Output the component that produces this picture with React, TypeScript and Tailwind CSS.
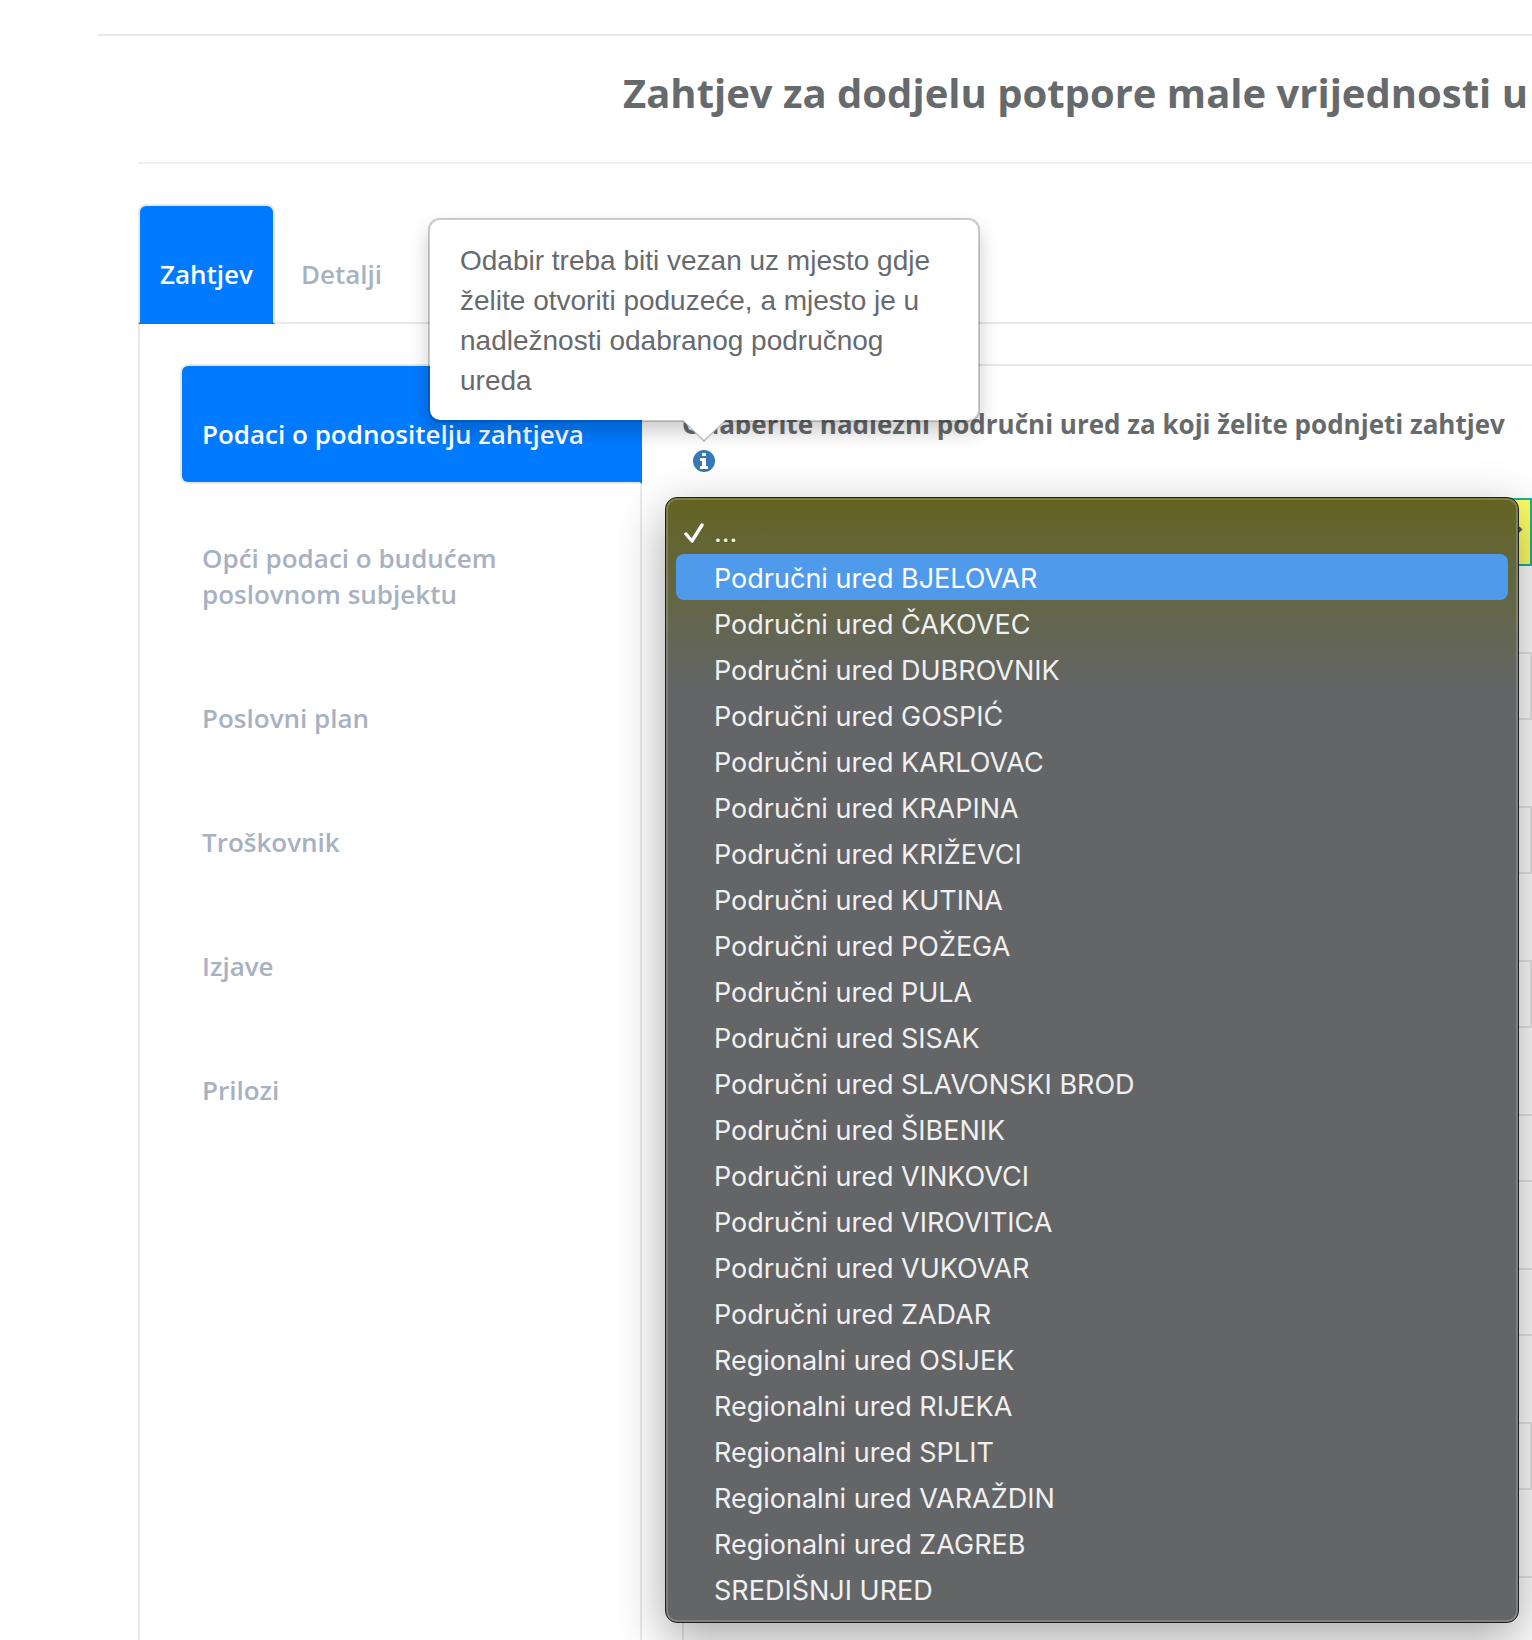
import { useState } from 'react';

const sections = [
  'Podaci o podnositelju zahtjeva',
  'Opći podaci o budućem poslovnom subjektu',
  'Poslovni plan',
  'Troškovnik',
  'Izjave',
  'Prilozi',
];

const offices = [
  '...',
  'Područni ured BJELOVAR',
  'Područni ured ČAKOVEC',
  'Područni ured DUBROVNIK',
  'Područni ured GOSPIĆ',
  'Područni ured KARLOVAC',
  'Područni ured KRAPINA',
  'Područni ured KRIŽEVCI',
  'Područni ured KUTINA',
  'Područni ured POŽEGA',
  'Područni ured PULA',
  'Područni ured SISAK',
  'Područni ured SLAVONSKI BROD',
  'Područni ured ŠIBENIK',
  'Područni ured VINKOVCI',
  'Područni ured VIROVITICA',
  'Područni ured VUKOVAR',
  'Područni ured ZADAR',
  'Regionalni ured OSIJEK',
  'Regionalni ured RIJEKA',
  'Regionalni ured SPLIT',
  'Regionalni ured VARAŽDIN',
  'Regionalni ured ZAGREB',
  'SREDIŠNJI URED',
];

function InfoTooltip() {
  return (
    <div
      id="office-hint"
      role="tooltip"
      className="absolute bottom-full left-1/2 z-20 mb-[28px] w-[552px] -translate-x-1/2 rounded-xl border-2 border-black/20 bg-white bg-clip-padding px-[30px] pt-[21px] pb-[19px] text-left font-['Liberation_Sans',Arial,sans-serif] text-[28px] leading-10 font-normal text-[#676a6c] shadow-[0_10px_20px_rgba(0,0,0,0.2)]"
    >
      Odabir treba biti vezan uz mjesto gdje želite otvoriti poduzeće, a mjesto je u nadležnosti odabranog područnog ureda
      <svg viewBox="0 0 44 22" className="absolute top-full left-1/2 h-[22px] w-11 -translate-x-1/2" aria-hidden="true">
        <path d="M0 0h44L22 22z" fill="#b4b4b4" />
        <path d="M1 0h42L22 20z" fill="#fff" />
      </svg>
    </div>
  );
}

function InfoIcon() {
  return (
    <svg viewBox="0 0 22 22" className="h-[22px] w-[22px]" aria-hidden="true">
      <circle cx="11" cy="11" r="11" fill="#337ab7" />
      <path d="M9 3h4v3H9zM7 8h6v8h2v3H7v-3h2v-5H7z" fill="#fff" />
    </svg>
  );
}

function CheckMark() {
  return (
    <svg viewBox="0 0 20 20" className="h-5 w-5" aria-hidden="true">
      <path d="M2 11l6 7L18 2" fill="none" stroke="currentColor" strokeWidth="3.4" strokeLinecap="round" strokeLinejoin="round" />
    </svg>
  );
}

interface OfficeMenuProps {
  selected: string;
  onSelect: (office: string) => void;
}

function OfficeMenu({ selected, onSelect }: OfficeMenuProps) {
  const [highlighted, setHighlighted] = useState(offices[1]);

  return (
    <ul
      role="listbox"
      aria-label="Područni uredi"
      className="absolute -top-px right-[13px] -left-[17px] z-10 rounded-xl border border-[#1c1c1c] bg-linear-to-b from-[#646420] from-0% via-[#636645] via-9% to-[#646567] to-17% px-[10px] py-[10px] font-[Inter,sans-serif] text-[27px] leading-[46px] text-[#f0f0f0] shadow-[inset_0_0_0_2px_rgba(255,255,255,0.18),0_16px_50px_rgba(0,0,0,0.35)]"
    >
      {offices.map((office) => (
        <li
          key={office}
          role="option"
          aria-selected={office === selected}
          onMouseEnter={() => setHighlighted(office)}
          onClick={() => onSelect(office)}
          className={`flex h-[46px] items-center rounded-lg pt-[3px] pl-2 whitespace-nowrap ${
            office === highlighted ? 'bg-[#4f9aeb] text-white' : ''
          }`}
        >
          <span className="flex w-[30px] shrink-0 text-white">{office === selected && <CheckMark />}</span>
          {office}
        </li>
      ))}
    </ul>
  );
}

const fieldClass = 'block h-[68px] w-full border-2 border-[#e5e6e7] bg-white px-6 outline-none';

export default function App() {
  const [office, setOffice] = useState(offices[0]);

  return (
    <div className="flex min-h-screen flex-col overflow-hidden bg-white pt-[34px] pl-[98px] font-['Open_Sans',sans-serif] text-[26px] leading-9 text-[#676a6c]">
      <div className="flex flex-1 flex-col border-t-2 border-[#e7eaec] pl-10">
        <header className="flex h-32 items-center justify-end border-b-2 border-[#eeeeee] pr-1 pb-3">
          <h1 className="text-[40px] leading-[44px] font-bold whitespace-nowrap">
            Zahtjev za dodjelu potpore male vrijednosti u
          </h1>
        </header>

        {/* Top tabs */}
        <nav className="mt-10 flex gap-1 border-b-2 border-[#e7eaec] font-semibold">
          <a
            href="#zahtjev"
            className="-mb-[2px] rounded-t-lg border-2 border-[#e7eaec] border-b-[#007bff] bg-[#007bff] px-5 pt-[50px] pb-[30px] text-white"
          >
            Zahtjev
          </a>
          <a href="#detalji" className="px-[22px] pt-[52px] pb-[30px] text-[#a7b1c2]">
            Detalji
          </a>
        </nav>

        <main className="flex flex-1 border-l-2 border-[#e7eaec] pt-10 pl-10">
          {/* Section list */}
          <nav className="flex w-[460px] shrink-0 flex-col gap-1 font-semibold">
            {sections.map((section, i) => (
              <a
                key={section}
                href={`#section-${i}`}
                className={`border-2 px-5 pt-[50px] pb-[30px] ${
                  i === 0
                    ? 'relative -mr-[2px] rounded-l-lg border-[#e7eaec] border-r-[#007bff] bg-[#007bff] text-white'
                    : 'border-transparent text-[#a7b1c2]'
                }`}
              >
                {section}
              </a>
            ))}
          </nav>

          <form className="flex min-w-0 flex-1 flex-col border-t-2 border-l-2 border-[#e7eaec] pt-10 pl-10">
            <label htmlFor="office" className="font-bold whitespace-nowrap">
              Odaberite nadležni područni ured za koji želite podnjeti zahtjev
            </label>
            <div className="flex h-9 items-center pt-[2px] pl-[11px]">
              <button type="button" aria-label="Pomoć" aria-describedby="office-hint" className="relative">
                <InfoIcon />
                <InfoTooltip />
              </button>
            </div>

            <div className="relative mt-5">
              <select
                id="office"
                value={office}
                onChange={(e) => setOffice(e.target.value)}
                className="block h-[68px] w-full appearance-none border-2 border-[#1ab394] bg-[#ffff66] px-6 outline-none"
              >
                {offices.map((name) => (
                  <option key={name}>{name}</option>
                ))}
              </select>
              <svg viewBox="0 0 16 10" className="absolute top-[28px] right-[9px] h-[10px] w-4" aria-hidden="true">
                <path d="M2 2l6 6 6-6" fill="none" stroke="#555" strokeWidth="4" />
              </svg>
              <OfficeMenu selected={office} onSelect={setOffice} />
            </div>

            <div className="mt-[86px] flex flex-1 flex-col gap-[86px]">
              <input aria-label="Ime" className={fieldClass} />
              <input aria-label="Prezime" className={fieldClass} />
              <input aria-label="OIB" className={fieldClass} />
              <input aria-label="Adresa" className={`${fieldClass} border-r-0`} />
              <input aria-label="Mjesto" className={`${fieldClass} border-r-0`} />
              <input aria-label="Telefon" className={fieldClass} />
              <textarea
                aria-label="Napomena"
                className="block w-full flex-1 resize-none border-2 border-r-0 border-b-0 border-[#e5e6e7] px-6 outline-none"
              />
            </div>
          </form>
        </main>
      </div>
    </div>
  );
}
